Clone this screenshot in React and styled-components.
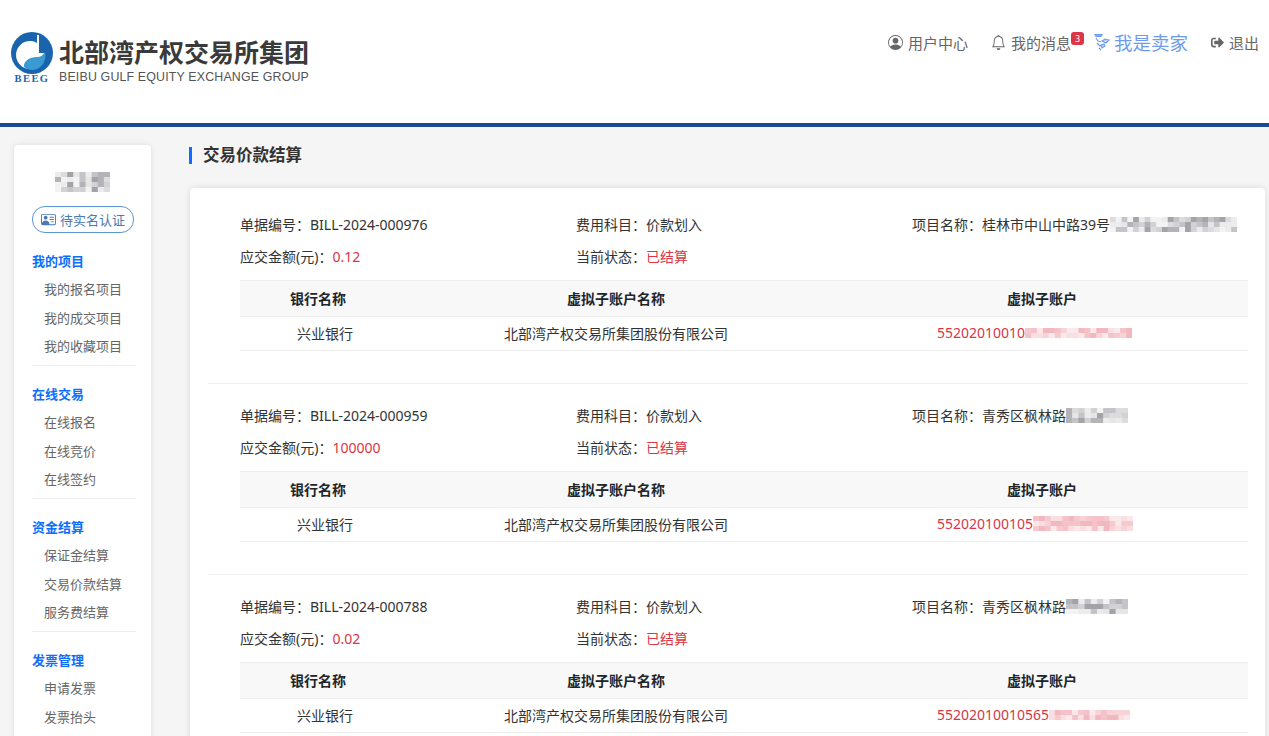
import styled, { createGlobalStyle } from "styled-components";
import { BsPersonCircle, BsBell, BsPersonVcard } from "react-icons/bs";
import { FaSignOutAlt } from "react-icons/fa";

const GlobalStyle = createGlobalStyle`
    html, body {
        margin: 0;
        padding: 0;
        height: 736px;
        overflow: hidden;
        background-color: #f5f5f5;
        font-family: "Noto Sans", "Noto Sans CJK SC", sans-serif;
        color: #333;
    }
    * {
        box-sizing: border-box;
    }
`;

const menus = [
    { title: "我的项目", items: ["我的报名项目", "我的成交项目", "我的收藏项目"] },
    { title: "在线交易", items: ["在线报名", "在线竞价", "在线签约"] },
    { title: "资金结算", items: ["保证金结算", "交易价款结算", "服务费结算"] },
    { title: "发票管理", items: ["申请发票", "发票抬头"] },
];

const bills = [
    {
        no: "BILL-2024-000976",
        amount: "0.12",
        project: "桂林市中山中路39号",
        projectMask: { cols: 22, rows: 3, seed: 3, w: 127 },
        account: "55202010010",
        accountMask: { cols: 18, rows: 2, seed: 5, w: 107 },
    },
    {
        no: "BILL-2024-000959",
        amount: "100000",
        project: "青秀区枫林路",
        projectMask: { cols: 10, rows: 3, seed: 7, w: 62 },
        account: "552020100105",
        accountMask: { cols: 17, rows: 3, seed: 11, w: 100 },
    },
    {
        no: "BILL-2024-000788",
        amount: "0.02",
        project: "青秀区枫林路",
        projectMask: { cols: 10, rows: 3, seed: 13, w: 62 },
        account: "55202010010565",
        accountMask: { cols: 14, rows: 2, seed: 17, w: 81 },
    },
];

// 打码区域, 按种子生成固定的马赛克色块
function Mosaic({ cols, rows, seed, w, tone = "gray" }) {
    const cell = w / cols;
    const shades = tone === "red"
        ? ["#f9dfe2", "#f5c9ce", "#f2b8bf", "#f7d3d7", "#f4c2c8", "#fbe8ea"]
        : ["#ececec", "#dcdcde", "#c4c4c8", "#e6e6e6", "#a3a3a8", "#f3f3f3", "#d2d2d4", "#b4b4b8"];
    const cells = [];
    for (let r = 0; r < rows; r++) {
        for (let c = 0; c < cols; c++) {
            const n = Math.sin((c + 1) * 12.9898 + (r + 1) * 78.233 + seed * 37.719) * 43758.5453;
            const i = Math.floor((n - Math.floor(n)) * shades.length);
            cells.push(<rect key={`${r}-${c}`} x={c * cell} y={r * 5} width={cell + 0.5} height={5.5} fill={shades[i]} />);
        }
    }
    return (
        <MaskSvg width={w} height={rows * 5} viewBox={`0 0 ${w} ${rows * 5}`}>
            {cells}
        </MaskSvg>
    );
}

function LogoMark() {
    return (
        <svg width="44" height="44" viewBox="0 0 44 44">
            <circle cx="22" cy="22" r="21" fill="#1a64ad" />
            <path d="M27 4h2v18h5v2A14 14 0 1 1 27 11.900z" fill="#fff" />
            <path d="M14 36c-1-6 6-10 13-10 4 0 6-2 8-5 2 8-3 17-12 18-3 .5-6-1-9-3z" fill="#3b9ad2" />
        </svg>
    );
}

function SellerIcon() {
    return (
        <svg width="16" height="20" viewBox="0 0 16 20" fill="none" stroke="#6f9be8" strokeWidth="1.1">
            <path d="M1 2.500h7l-1 2H2z" fill="#8fb2ee" />
            <path d="M2 6l2 3 3 1M3 11l3 3 2-1M5 16l2 2" />
            <path d="M8 9l3-2 4 1-3 3z" fill="#c5d7f6" />
            <path d="M7 13l3-1 1 2-3 2z" fill="#c5d7f6" />
        </svg>
    );
}

export default function App() {
    return (
        <>
            <GlobalStyle />
            <Header>
                <Logo>
                    <LogoLeft>
                        <LogoMark />
                        <LogoBeeg>BEEG</LogoBeeg>
                    </LogoLeft>
                    <LogoText>
                        <LogoCn>北部湾产权交易所集团</LogoCn>
                        <LogoEn>BEIBU GULF EQUITY EXCHANGE GROUP</LogoEn>
                    </LogoText>
                </Logo>
                <Nav>
                    <NavItem><BsPersonCircle size={15} />用户中心</NavItem>
                    <NavItem>
                        <BsBell size={15} />我的消息
                        <Badge>3</Badge>
                    </NavItem>
                    <SellerLink><SellerIcon />我是卖家</SellerLink>
                    <NavItem><FaSignOutAlt size={13} />退出</NavItem>
                </Nav>
            </Header>
            <Layout>
                <Sidebar>
                    <UserName><Mosaic cols={9} rows={4} seed={4} w={55} /></UserName>
                    <AuthButton><BsPersonVcard size={15} />待实名认证</AuthButton>
                    {menus.map((menu) => (
                        <MenuGroup key={menu.title}>
                            <MenuTitle>{menu.title}</MenuTitle>
                            {menu.items.map((item) => (
                                <MenuItem key={item}>{item}</MenuItem>
                            ))}
                        </MenuGroup>
                    ))}
                </Sidebar>
                <Main>
                    <PageTitle>交易价款结算</PageTitle>
                    <Card>
                        {bills.map((bill) => (
                            <Bill key={bill.no}>
                                <InfoRow>
                                    <Info>单据编号：{bill.no}</Info>
                                    <Info>费用科目：价款划入</Info>
                                    <Info>项目名称：{bill.project}<Mosaic {...bill.projectMask} /></Info>
                                </InfoRow>
                                <InfoRow>
                                    <Info>应交金额(元)：<Red>{bill.amount}</Red></Info>
                                    <Info>当前状态：<Red>已结算</Red></Info>
                                </InfoRow>
                                <Table>
                                    <HeadRow>
                                        <span>银行名称</span>
                                        <span>虚拟子账户名称</span>
                                        <span>虚拟子账户</span>
                                    </HeadRow>
                                    <BodyRow>
                                        <BankCell>兴业银行</BankCell>
                                        <span>北部湾产权交易所集团股份有限公司</span>
                                        <AccountCell>
                                            {bill.account}
                                            <Mosaic {...bill.accountMask} tone="red" />
                                        </AccountCell>
                                    </BodyRow>
                                </Table>
                            </Bill>
                        ))}
                    </Card>
                </Main>
            </Layout>
        </>
    );
}

const Header = styled.header`
    display: flex;
    justify-content: space-between;
    height: 127px;
    padding: 31px 10px 0 10px;
    background-color: #fff;
    border-bottom: 4px solid #1c4a94;
`;

const Logo = styled.div`
    display: flex;
    gap: 5px;
`;

const LogoLeft = styled.div`
    display: flex;
    flex-direction: column;
    align-items: center;
    width: 44px;
`;

const LogoBeeg = styled.span`
    font-family: "Liberation Serif", serif;
    font-size: 10.5px;
    font-weight: 700;
    line-height: 10px;
    letter-spacing: 1.4px;
    color: #1a64ad;
    margin-top: -1px;
    white-space: nowrap;
`;

const LogoText = styled.div`
    display: flex;
    flex-direction: column;
    padding-top: 4px;
`;

const LogoCn = styled.div`
    font-size: 25px;
    font-weight: 700;
    line-height: 34px;
    color: #3a3a3a;
`;

const LogoEn = styled.div`
    font-family: "Liberation Sans", sans-serif;
    font-size: 12.4px;
    line-height: 16px;
    letter-spacing: 0.16px;
    color: #555;
    white-space: nowrap;
`;

const Nav = styled.nav`
    display: flex;
    align-items: flex-start;
    gap: 23px;
`;

const NavItem = styled.a`
    position: relative;
    display: flex;
    align-items: center;
    gap: 5px;
    height: 24px;
    padding-bottom: 2px;
    font-size: 15px;
    color: #666;
    white-space: nowrap;
`;

const Badge = styled.span`
    position: absolute;
    top: 1px;
    right: -13px;
    width: 13px;
    height: 13px;
    border-radius: 3px;
    background-color: #dc3545;
    color: #fff;
    font-size: 9px;
    line-height: 13px;
    text-align: center;
`;

const SellerLink = styled.a`
    display: flex;
    align-items: center;
    gap: 4px;
    height: 24px;
    padding-bottom: 2px;
    font-size: 18.5px;
    color: #6f9be8;
    white-space: nowrap;
`;

const Layout = styled.div`
    display: flex;
    align-items: flex-start;
    padding-left: 14px;
`;

const Sidebar = styled.aside`
    flex: none;
    width: 137px;
    margin-top: 18px;
    padding: 27px 15px 0 18px;
    background-color: #fff;
    border-radius: 4px;
    box-shadow: 0 0 6px rgba(0, 0, 0, 0.1);
`;

const UserName = styled.div`
    display: flex;
    justify-content: center;
    height: 20px;
    margin-right: 3px;
`;

const AuthButton = styled.button`
    display: flex;
    align-items: center;
    justify-content: center;
    gap: 4px;
    width: 102px;
    height: 27px;
    margin-top: 14px;
    padding: 0;
    background-color: #fff;
    border: 1px solid #5b96d6;
    border-radius: 13px;
    font-family: inherit;
    font-size: 13px;
    color: #4a7ab0;
`;

const MenuGroup = styled.div`
    height: 133px;
    padding-top: 14px;
    border-bottom: 1px solid #eee;
`;

const MenuTitle = styled.div`
    font-size: 13px;
    font-weight: 700;
    line-height: 28px;
    color: #0d6efd;
`;

const MenuItem = styled.div`
    padding-left: 12px;
    font-size: 13px;
    line-height: 28.5px;
    color: #666;
    white-space: nowrap;
`;

const Main = styled.main`
    flex: 1;
    min-width: 0;
    margin-left: 38px;
    padding-right: 4px;
`;

const PageTitle = styled.h1`
    height: 17px;
    margin: 20px 0 24px;
    padding-left: 11px;
    border-left: 3px solid #0d6efd;
    font-size: 16.5px;
    font-weight: 700;
    line-height: 16px;
    color: #333;
`;

const Card = styled.section`
    margin-left: 1px;
    padding: 20px 17px 0 18px;
    background-color: #fff;
    border-radius: 4px;
    box-shadow: 0 0 6px rgba(0, 0, 0, 0.12);
`;

const Bill = styled.article`
    height: 176px;
    margin-bottom: 15px;
    padding: 1px 0 0 32px;
    border-bottom: 1px solid #f0f0f0;
`;

const InfoRow = styled.div`
    display: grid;
    grid-template-columns: 336px 336px 1fr;
    height: 32px;
    padding-bottom: 2px;
    align-items: center;
`;

const Info = styled.div`
    display: flex;
    align-items: center;
    font-size: 14px;
    color: #333;
    white-space: nowrap;
`;

const Red = styled.span`
    color: #dc3545;
`;

const MaskSvg = styled.svg`
    flex: none;
    display: block;
    filter: blur(0.6px);
`;

const Table = styled.div`
    margin-top: 7px;
`;

const HeadRow = styled.div`
    display: grid;
    grid-template-columns: 156px 440px 412px;
    height: 37px;
    padding-bottom: 2px;
    align-items: center;
    justify-items: center;
    background-color: #f8f8f8;
    border-top: 1px solid #eee;
    border-bottom: 1px solid #eee;
    font-size: 14px;
    font-weight: 700;
    color: #212529;
`;

const BodyRow = styled.div`
    display: grid;
    grid-template-columns: 156px 440px 412px;
    height: 34px;
    padding-bottom: 2px;
    align-items: center;
    justify-items: center;
    border-bottom: 1px solid #eee;
    font-size: 14px;
    color: #333;
`;

const BankCell = styled.span`
    padding-left: 14px;
`;

const AccountCell = styled.span`
    display: flex;
    align-items: center;
    justify-self: start;
    padding-left: 101px;
    color: #dc3545;
`;
